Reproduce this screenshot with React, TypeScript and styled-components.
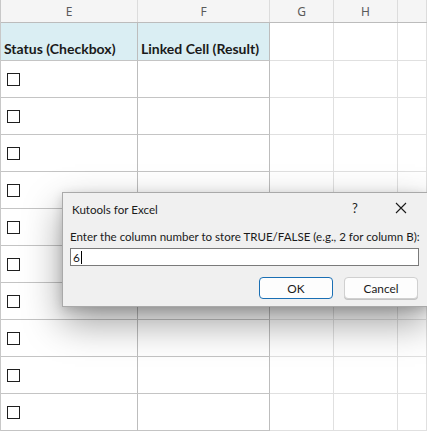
import styled, { createGlobalStyle } from "styled-components";

const GlobalStyle = createGlobalStyle`
  html, body {
    margin: 0;
    padding: 0;
    background: #ffffff;
  }
  body {
    width: 427px;
    height: 431px;
    overflow: hidden;
  }
`;

const COLS = "137px 132px 64px 64px 1fr";

const Page = styled.div`
  position: relative;
  width: 427px;
  height: 431px;
  overflow: hidden;
  background: #ffffff;
`;

const Sheet = styled.div`
  display: flex;
  flex-direction: column;
  border-left: 1px solid #c8c8c8;
`;

const HeaderRow = styled.div`
  display: grid;
  grid-template-columns: ${COLS};
  height: 22px;
  background: #f5f5f5;
  border-bottom: 1px solid #bcbcbc;
`;

const ColLetter = styled.div`
  display: flex;
  align-items: center;
  justify-content: center;
  font-family: "Noto Sans", "Open Sans", sans-serif;
  font-size: 12px;
  color: #5a5a5a;
  border-right: 1px solid #dcdcdc;
`;

type RowProps = {
  $height: number;
};

const Row = styled.div<RowProps>`
  display: grid;
  grid-template-columns: ${COLS};
  height: ${(p) => p.$height}px;
`;

type CellProps = {
  $bordered?: boolean;
  $title?: boolean;
};

const Cell = styled.div<CellProps>`
  display: flex;
  align-items: ${(p) => (p.$title ? "flex-end" : "center")};
  padding: ${(p) => (p.$title ? "0 0 3px 3px" : "0 0 0 6px")};
  box-sizing: border-box;
  background: ${(p) => (p.$title ? "#daeef3" : "transparent")};
  border-right: 1px solid ${(p) => (p.$bordered ? "#bdbdbd" : "#e0e0e0")};
  border-bottom: 1px solid ${(p) => (p.$bordered ? "#c4c4c4" : "#e0e0e0")};
  font-family: Lato, "Liberation Sans", sans-serif;
  font-weight: 700;
  font-size: 14px;
  color: #1a1a1a;
  white-space: nowrap;
`;

const CheckBox = styled.span`
  display: block;
  width: 11px;
  height: 11px;
  border: 1.4px solid #1f1f1f;
  background: #ffffff;
`;

const Dialog = styled.div`
  position: absolute;
  left: 62px;
  top: 192px;
  width: 366px;
  height: 115px;
  box-sizing: border-box;
  background: #f0f0f0;
  border: 1px solid #a9a9a9;
  box-shadow: 0 16px 36px rgba(0, 0, 0, 0.38), 0 3px 10px rgba(0, 0, 0, 0.16);
  display: flex;
  flex-direction: column;
  font-family: Lato, "Noto Sans", sans-serif;
  color: #1a1a1a;
`;

const TitleBar = styled.div`
  display: flex;
  align-items: center;
  height: 30px;
  padding: 0 3px 0 9px;
  font-size: 11.6px;
`;

const Title = styled.div`
  flex: 1;
  padding-top: 2px;
`;

const TitleButton = styled.div`
  width: 46px;
  height: 30px;
  display: flex;
  align-items: center;
  justify-content: center;
  font-size: 13px;
  color: #222;
`;

const Body = styled.div`
  display: flex;
  flex-direction: column;
  padding: 6px 8px 0 7px;
`;

const Label = styled.div`
  font-size: 11.55px;
  white-space: nowrap;
  line-height: 16px;
`;

const Input = styled.div`
  margin-top: 3px;
  height: 18px;
  box-sizing: border-box;
  background: #ffffff;
  border: 1px solid #7a7a7a;
  display: flex;
  align-items: center;
  padding-left: 2px;
  font-size: 11.8px;
`;

const Caret = styled.span`
  display: inline-block;
  width: 1px;
  height: 13px;
  background: #000;
  margin-left: 1px;
`;

const Buttons = styled.div`
  display: flex;
  justify-content: flex-end;
  gap: 11px;
  margin-top: 11px;
  padding-right: 1px;
`;

type ButtonProps = {
  $primary?: boolean;
};

const Button = styled.div<ButtonProps>`
  width: 74px;
  height: 22px;
  box-sizing: border-box;
  border-radius: 4px;
  display: flex;
  align-items: center;
  justify-content: center;
  font-size: 11.8px;
  background: #fdfdfd;
  border: ${(p) => (p.$primary ? "1.5px solid #1a6fb4" : "1px solid #d0d0d0")};
  box-shadow: ${(p) => (p.$primary ? "none" : "0 1px 0 #c4c4c4")};
`;

function CloseIcon() {
  return (
    <svg width="12" height="12" viewBox="0 0 12 12">
      <path d="M1 1 L11 11 M11 1 L1 11" stroke="#1a1a1a" strokeWidth="1.1" />
    </svg>
  );
}

const letters = ["E", "F", "G", "H", ""];

function App() {
  const rows = Array.from({ length: 10 });

  return (
    <Page>
      <GlobalStyle />
      <Sheet>
        <HeaderRow>
          {letters.map((l, i) => (
            <ColLetter key={i}>{l}</ColLetter>
          ))}
        </HeaderRow>
        <Row $height={38}>
          <Cell $bordered $title>
            Status (Checkbox)
          </Cell>
          <Cell $bordered $title>
            Linked Cell (Result)
          </Cell>
          <Cell />
          <Cell />
          <Cell />
        </Row>
        {rows.map((_, i) => (
          <Row key={i} $height={37}>
            <Cell $bordered>
              <CheckBox />
            </Cell>
            <Cell $bordered />
            <Cell />
            <Cell />
            <Cell />
          </Row>
        ))}
      </Sheet>

      <Dialog>
        <TitleBar>
          <Title>Kutools for Excel</Title>
          <TitleButton>?</TitleButton>
          <TitleButton>
            <CloseIcon />
          </TitleButton>
        </TitleBar>
        <Body>
          <Label>
            Enter the column number to store TRUE/FALSE (e.g., 2 for column B):
          </Label>
          <Input>
            6
            <Caret />
          </Input>
          <Buttons>
            <Button $primary>OK</Button>
            <Button>Cancel</Button>
          </Buttons>
        </Body>
      </Dialog>
    </Page>
  );
}

export default App;
